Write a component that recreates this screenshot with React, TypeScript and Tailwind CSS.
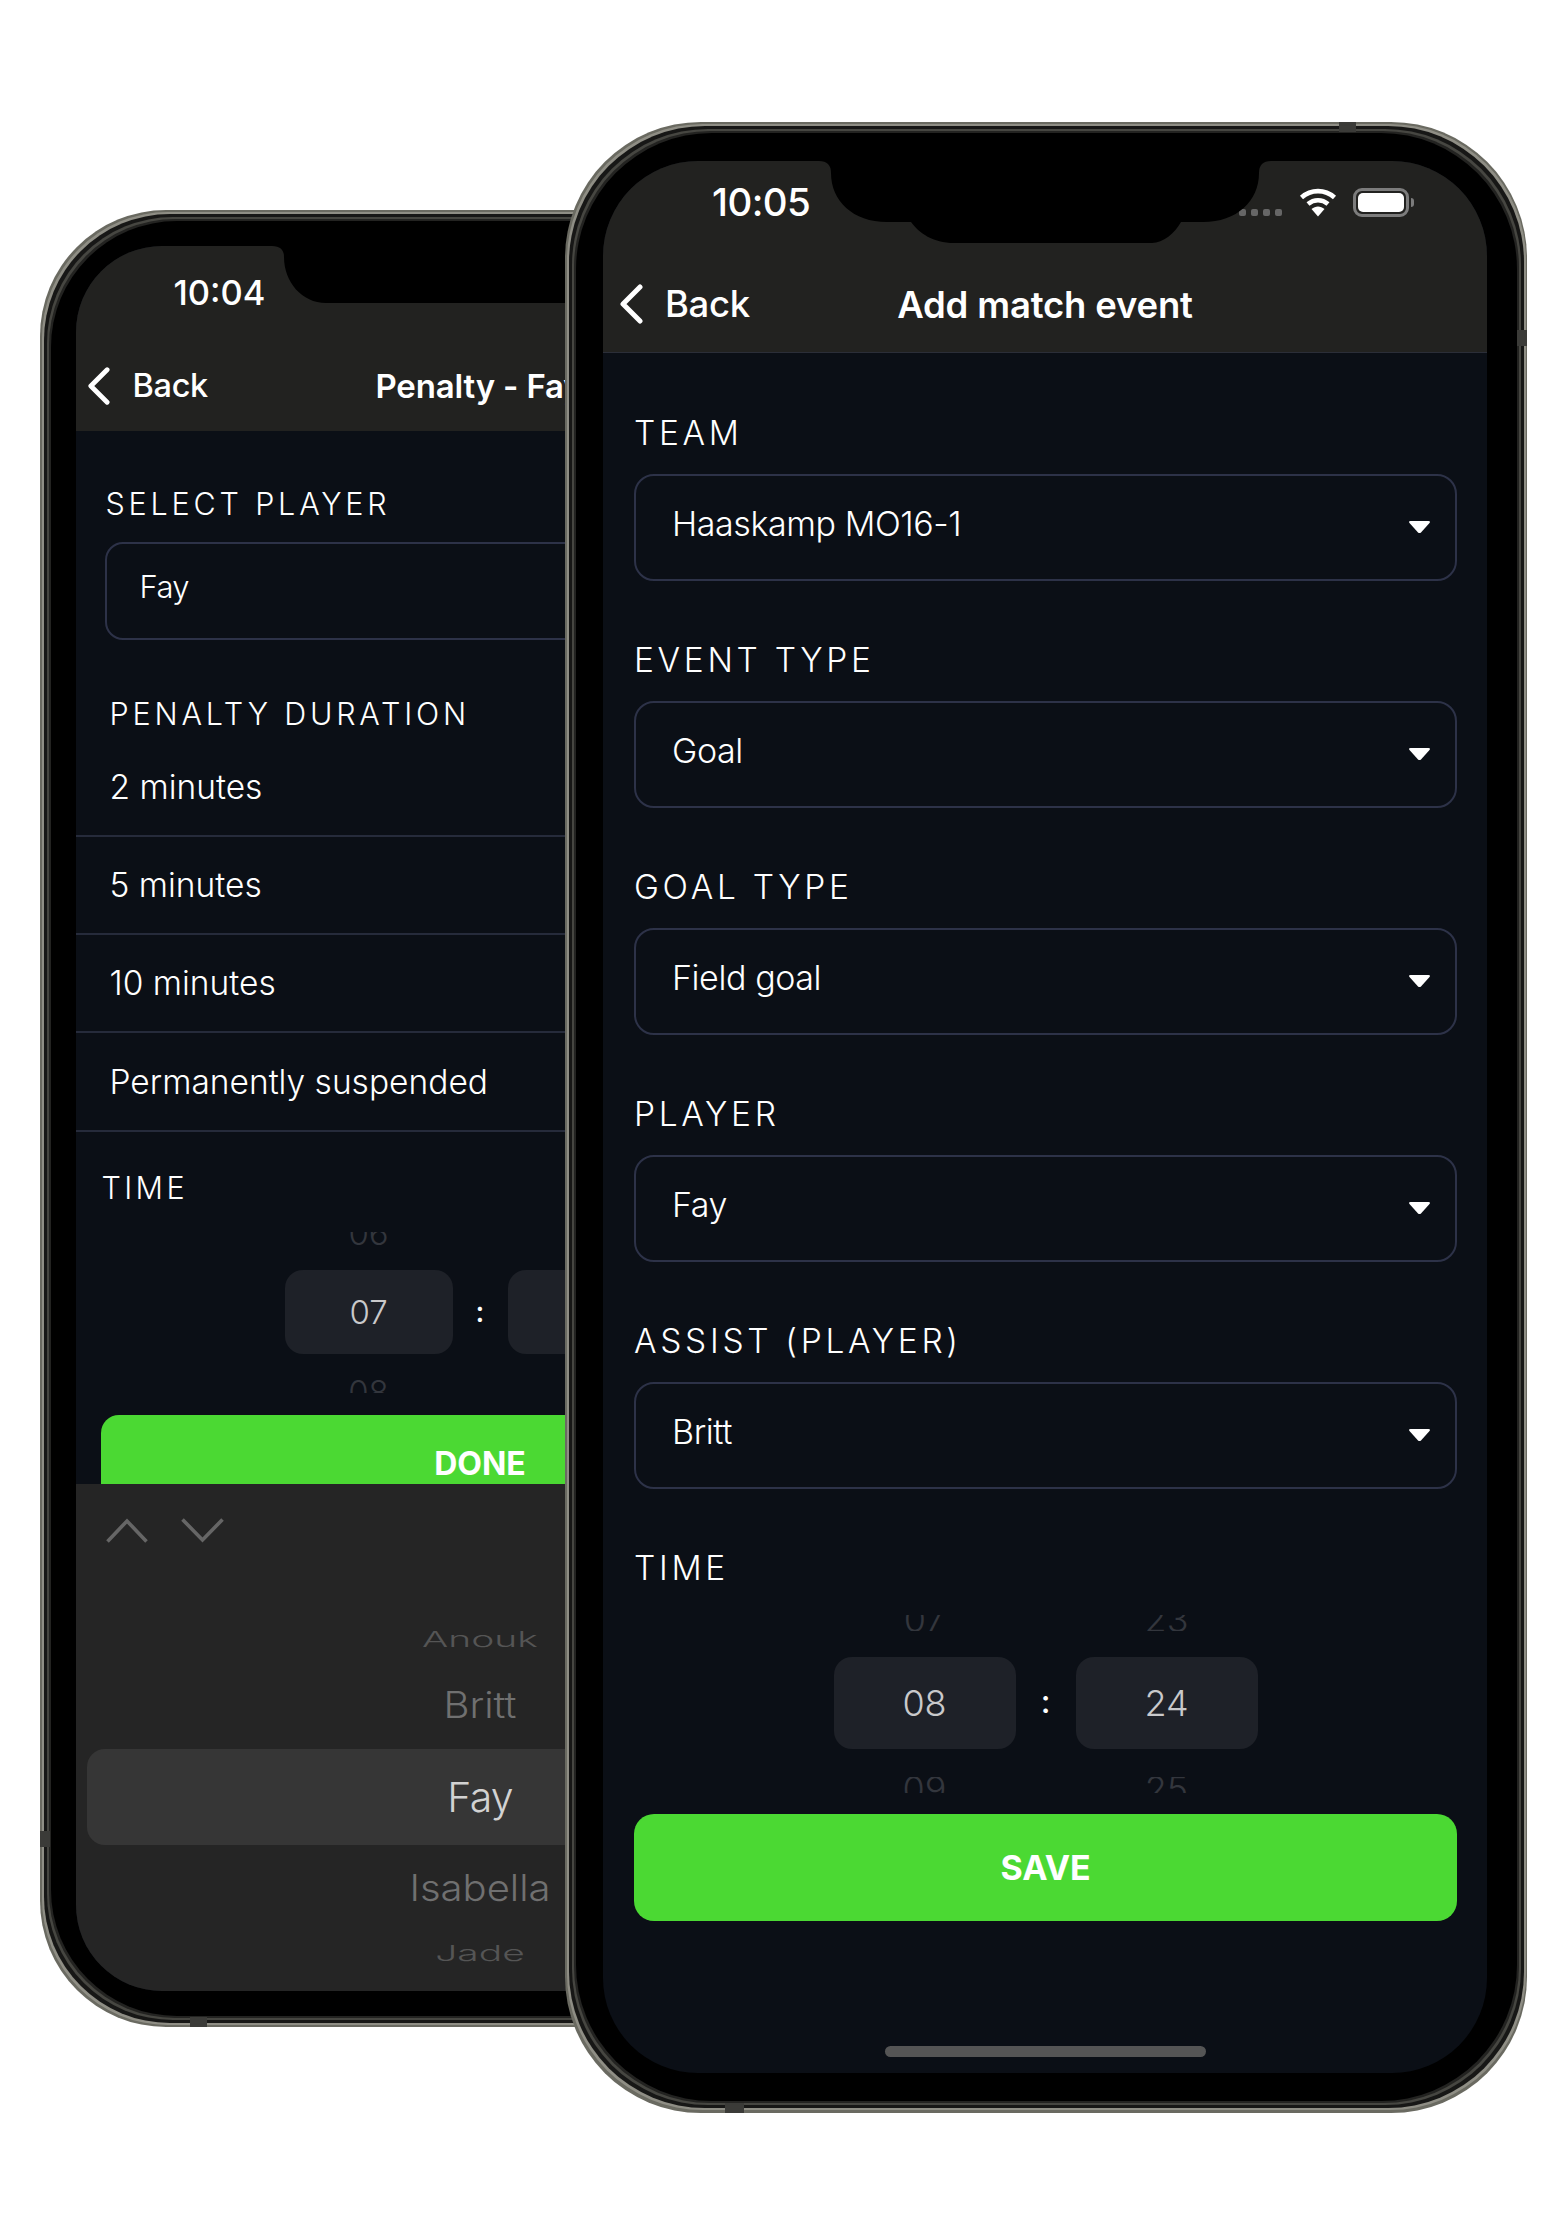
import React from "react";

const font = { fontFamily: "Inter, 'Noto Sans', sans-serif" };

function Bezel({ className, inner, children }: { className: string; inner: string; children: React.ReactNode }) {
  return (
    <div className={`relative shrink-0 p-[1.5px] bg-[#6a6a61] ${className}`}>
      <div className="rounded-[inherit] p-[2px] bg-[#8f8e85]">
        <div className="rounded-[inherit] p-[3px] bg-[#171716]">
          <div className="rounded-[inherit] p-[2px] bg-[#464641]">
            <div className="rounded-[inherit] p-[2px] bg-[#232321]">
              <div className={`rounded-[inherit] bg-black ${inner}`}>{children}</div>
            </div>
          </div>
        </div>
      </div>
    </div>
  );
}

function Chevron({ className }: { className: string }) {
  return (
    <svg className={className} viewBox="0 0 24 40" fill="none">
      <path d="M21 3 L4 20 L21 37" stroke="#fff" strokeWidth="5" strokeLinecap="round" strokeLinejoin="round" />
    </svg>
  );
}

function Caret() {
  return (
    <svg className="w-[23px] h-[14px]" viewBox="0 0 23 14">
      <path d="M2.5 1 H20.5 Q22.8 1 21.5 3 L13 12.4 Q11.5 13.8 10 12.4 L1.5 3 Q0.2 1 2.5 1 Z" fill="#fff" />
    </svg>
  );
}

function Wifi() {
  return (
    <svg className="w-[38px] h-[29px]" viewBox="0 0 38 29" fill="none">
      <path d="M2.5 9.5 C12 1 26 1 35.5 9.5" stroke="#fff" strokeWidth="4.6" />
      <path d="M9 16 C15 11 23 11 29 16" stroke="#fff" strokeWidth="4.6" />
      <path d="M12.5 21 C16.5 17.5 21.5 17.5 25.5 21 L19 28.5 Z" fill="#fff" />
    </svg>
  );
}

function Battery() {
  return (
    <div className="flex items-center gap-[2px]">
      <div className="w-[56px] h-[29px] rounded-[9px] border-[3px] border-[#7c7c7c] p-[2px]">
        <div className="w-full h-full rounded-[5px] bg-white" />
      </div>
      <div className="w-[3px] h-[9px] rounded-r-[3px] bg-[#7c7c7c]" />
    </div>
  );
}

function Field({ label, value }: { label: string; value: string }) {
  return (
    <div className="mb-[58px]">
      <div className="h-[42px] -mb-[2px] flex items-center text-[33.5px] tracking-[0.11em] text-white font-light">{label}</div>
      <div className="mt-[22px] h-[107px] rounded-[20px] border-2 border-[#2d3248] flex items-center justify-between pl-[36px] pr-[24px]">
        <span className="text-[34px] tracking-[-0.012em] text-white font-light -mt-[9px]">{value}</span>
        <span className="-mt-[2px]"><Caret /></span>
      </div>
    </div>
  );
}

function Ghost({ text, top, h, size }: { text: string; top: boolean; h: string; size: string }) {
  return (
    <div className={`${h} overflow-hidden flex justify-center ${top ? "items-end" : "items-start"}`}>
      <span className={`${size} leading-[24px] font-light text-[#33363d]`}>{text}</span>
    </div>
  );
}

function FrontPhone() {
  return (
    <Bezel className="z-10 -ml-[354px] mt-[122px] w-[962px] h-[1991px] rounded-[136px]" inner="pl-[27.5px] pr-[32px] pt-[28.5px] pb-[28px] h-full">
      <div className="relative w-[884px] h-[1912px] rounded-[95px] overflow-hidden bg-[#0b0f16] flex flex-col" style={font}>
        <header className="h-[192px] bg-[#222220] border-b border-[#2b2e38] shrink-0 relative">
          <div className="pt-[19px] pl-[109px] text-[38.5px] leading-[44px] font-medium text-white tracking-[-0.015em]">10:05</div>
          <div className="relative mt-[51px] h-[60px] flex items-center justify-center">
            <div className="absolute left-[16px] top-[2px] flex items-center gap-[22px]">
              <Chevron className="w-[24px] h-[44px]" />
              <span className="text-[36.5px] font-medium text-white tracking-[-0.01em]">Back</span>
            </div>
            <span className="text-[36.5px] font-semibold text-white tracking-[-0.005em]">Add match event</span>
          </div>
          <div className="absolute left-[636px] top-[48px] flex gap-[5px]">
            {[0, 1, 2, 3].map((i) => (
              <div key={i} className="w-[7px] h-[7px] rounded-[2px] bg-[#666]" />
            ))}
          </div>
          <div className="absolute left-[696px] top-[27px]"><Wifi /></div>
          <div className="absolute left-[750px] top-[27px]"><Battery /></div>
        </header>
        <svg className="absolute left-0 top-0 w-[884px] h-[84px]" viewBox="0 0 884 84">
          <path d="M216 0 Q228 0 228 12 C228 40 250 61 284 61 L308 61 C316 72 330 82 351 82 L549 82 C560 82 572 72 578 61 L600 61 C634 61 656 40 656 12 Q656 0 668 0 Z" fill="#000" />
        </svg>
        <main className="flex-1 flex flex-col pl-[31px] pr-[30px] pt-[59px]">
          <Field label="TEAM" value="Haaskamp MO16-1" />
          <Field label="EVENT TYPE" value="Goal" />
          <Field label="GOAL TYPE" value="Field goal" />
          <Field label="PLAYER" value="Fay" />
          <Field label="ASSIST (PLAYER)" value="Britt" />
          <div className="mt-[1px] h-[40px] flex items-center text-[33.5px] tracking-[0.11em] text-white font-light">TIME</div>
          <div className="mt-[27px] flex justify-center gap-[60px]">
            {[["07", "08", "09"], ["23", "24", "25"]].map((col, i) => (
              <div key={i} className="relative w-[182px]">
                <Ghost text={col[0]} top h="h-[16px]" size="text-[36px]" />
                <div className="mt-[26px] h-[92px] rounded-[18px] bg-[#1e2128] flex items-center justify-center text-[36px] font-light text-[#c9c9cb]">{col[1]}</div>
                <div className="mt-[28px]"><Ghost text={col[2]} top={false} h="h-[16px]" size="text-[36px]" /></div>
                {i === 0 && <div className="absolute left-[182px] w-[60px] top-[47px] text-center text-[32px] font-medium text-white leading-[80px]">:</div>}
              </div>
            ))}
          </div>
          <div className="mt-[21px] h-[107px] rounded-[20px] bg-[#4bd933] flex items-center justify-center text-[34px] font-bold text-white tracking-[-0.005em]">SAVE</div>
          <div className="mt-auto mb-[16px] w-[321px] h-[11px] rounded-full bg-[#555] self-center" />
        </main>
      </div>
      <div className="absolute left-[774px] top-0 w-[17px] h-[10px] bg-[#3b3b38]" />
      <div className="absolute left-[160px] bottom-0 w-[19px] h-[10px] bg-[#3b3b38]" />
      <div className="absolute right-0 top-[208px] w-[10px] h-[16px] bg-[#3b3b38]" />
    </Bezel>
  );
}

function BackPhone() {
  const rows = ["2 minutes", "5 minutes", "10 minutes", "Permanently suspended"];
  return (
    <Bezel className="ml-[40px] mt-[210px] w-[879px] h-[1817px] rounded-[126px]" inner="px-[25px] pt-[25px] pb-[25px] h-full">
      <div className="relative w-[807px] h-[1745px] rounded-[86px] overflow-hidden bg-[#0b0f16] flex flex-col" style={font}>
        <header className="h-[185px] bg-[#222220] shrink-0">
          <div className="pt-[27px] pl-[98px] text-[34.5px] leading-[40px] font-medium text-white">10:04</div>
          <div className="relative mt-[49px] h-[50px] flex items-center justify-center">
            <div className="absolute left-[11px] top-[0px] flex items-center gap-[23px]">
              <Chevron className="w-[23px] h-[40px]" />
              <span className="text-[32.5px] font-medium text-white tracking-[-0.01em]">Back</span>
            </div>
            <span className="text-[33px] font-semibold text-white tracking-[-0.005em]">Penalty - Fay</span>
          </div>
        </header>
        <svg className="absolute left-0 top-0 w-[807px] h-[60px]" viewBox="0 0 807 60">
          <path d="M196 0 Q208 0 208 11 C208 36 226 57 250 57 L560 57 C584 57 600 36 600 11 Q600 0 612 0 Z" fill="#000" />
        </svg>
        <main className="h-[1053px] overflow-hidden shrink-0 pt-[55px]">
          <div className="pl-[30px] h-[36px] flex items-center text-[30.5px] tracking-[0.125em] text-white font-light">SELECT PLAYER</div>
          <div className="ml-[29px] mr-[30px] mt-[20px] h-[98px] rounded-[18px] border-2 border-[#2d3248] flex items-center pl-[33px] pb-[6px] text-[31px] tracking-[-0.02em] text-white font-light">Fay</div>
          <div className="mt-[56px] pl-[34px] h-[36px] flex items-center text-[30.5px] tracking-[0.125em] text-white font-light">PENALTY DURATION</div>
          <div className="mt-[7px]">
            {rows.map((r) => (
              <div key={r} className="h-[98.33px] border-b-2 border-[#262b3b] pl-[34px] flex items-center text-[33.5px] text-white font-light">{r}</div>
            ))}
          </div>
          <div className="mt-[38px] pl-[26px] h-[36px] flex items-center text-[30.5px] tracking-[0.11em] text-white font-light">TIME</div>
          <div className="mt-[26px] pl-[2px] flex justify-center gap-[55px]">
            {[["06", "07", "08"], ["29", "30", "31"]].map((col, i) => (
              <div key={i} className="relative w-[168px]">
                <Ghost text={col[0]} top h="h-[13px]" size="text-[33px]" />
                <div className="mt-[25px] h-[84px] rounded-[18px] bg-[#1e2128] flex items-center justify-center pt-[2px] text-[33px] font-light text-[#c9c9cb]">{col[1]}</div>
                <div className="mt-[26px]"><Ghost text={col[2]} top={false} h="h-[13px]" size="text-[33px]" /></div>
                {i === 0 && <div className="absolute left-[168px] w-[55px] top-[44px] text-center text-[29px] font-medium text-white leading-[72px]">:</div>}
              </div>
            ))}
          </div>
          <div className="mt-[22px] mx-[25px] h-[97px] rounded-[18px] bg-[#4bd933] flex justify-center pl-[2px] pt-[29px] text-[32px] leading-[40px] font-bold text-white">DONE</div>
        </main>
        <section className="flex-1 bg-[#252525] flex flex-col">
          <div className="mt-[34px] ml-[30px] flex gap-[33px] h-[24px]">
            <svg className="w-[42px] h-[25px]" viewBox="0 0 42 25" fill="none"><path d="M1.5 23.5 L21 3 L40.5 23.5" stroke="#666" strokeWidth="3.6" /></svg>
            <svg className="w-[43px] h-[25px]" viewBox="0 0 43 25" fill="none"><path d="M1.5 1.5 L21.5 22 L41.5 1.5" stroke="#666" strokeWidth="3.6" /></svg>
          </div>
          <div className="mt-[83px] pl-[2px] h-[30px] flex items-center justify-center"><span className="text-[39px] text-[#555] font-light scale-y-[0.55] inline-block">Anouk</span></div>
          <div className="mt-[30px] pl-[2px] h-[40px] flex items-center justify-center"><span className="text-[40px] text-[#707070] font-light scale-y-[0.9] inline-block">Britt</span></div>
          <div className="mt-[24px] mx-[11px] h-[96px] rounded-[18px] bg-[#363636] flex items-center justify-center pl-[2px] pt-[2px] text-[41px] text-[#d2d2d2] font-light tracking-[-0.02em]">Fay</div>
          <div className="mt-[23px] pl-[2px] h-[40px] flex items-center justify-center"><span className="text-[40px] text-[#707070] font-light scale-y-[0.9] inline-block">Isabella</span></div>
          <div className="mt-[31px] pl-[2px] h-[30px] flex items-center justify-center"><span className="text-[39px] text-[#555] font-light scale-y-[0.55] inline-block">Jade</span></div>
        </section>
      </div>
      <div className="absolute left-[150px] bottom-0 w-[17px] h-[10px] bg-[#3b3b38]" />
      <div className="absolute left-0 bottom-[180px] w-[10px] h-[16px] bg-[#3b3b38]" />
    </Bezel>
  );
}

export default function App() {
  return (
    <div className="w-[1568px] h-[2236px] bg-white overflow-hidden flex items-start">
      <BackPhone />
      <FrontPhone />
    </div>
  );
}
